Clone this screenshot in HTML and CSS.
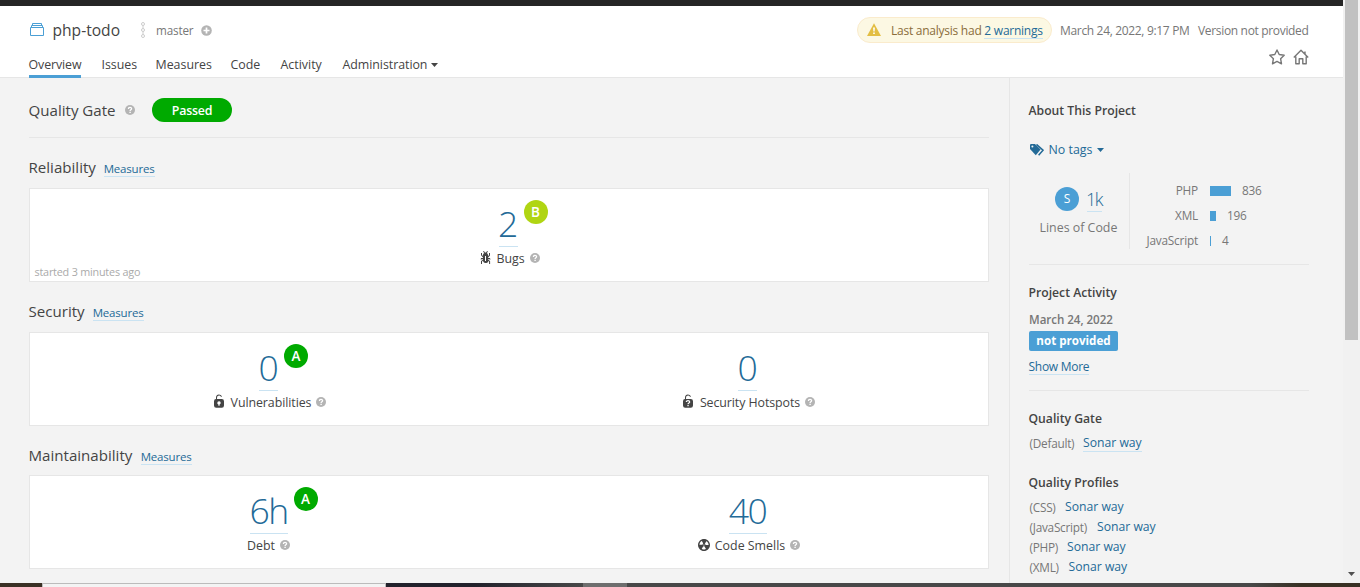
FILE: index.html
```html
<!DOCTYPE html>
<html lang="en">
<head>
<meta charset="utf-8">
<title>php-todo</title>
<link rel="stylesheet" href="styles.css">
</head>
<body>
<svg class="defs" aria-hidden="true">
  <symbol id="help" viewBox="0 0 10 10"><circle cx="5" cy="5" r="5" fill="#b4b4b4"/><path d="M3.4 3.9C3.4 1.8 6.6 1.8 6.6 3.8C6.6 4.8 5.1 4.8 5.1 6" fill="none" stroke="#fff" stroke-width="1.3"/><path d="M4.4 6.8h1.4v1.3H4.4z" fill="#fff"/></symbol>
  <symbol id="caret" viewBox="0 0 7 4"><path d="M0 0h7L3.500 4z" fill="currentColor"/></symbol>
</svg>
<div class="topbar"></div>
<div class="shell">
  <div class="page">
    <header class="header">
      <div class="header-left">
        <div class="crumbs">
          <svg class="proj" width="14" height="13" viewBox="0 0 14 13" fill="none" stroke="#4b9fd5"><path d="M.5 4.500h13v8H.5zM1.500 4V2.500h11V4M2.500 2V.5h9V2"/></svg>
          <span class="proj-name">php-todo</span>
          <svg class="branch" width="6" height="16" viewBox="0 0 6 16" fill="none" stroke="#ccc"><circle cx="3" cy="2" r="1.500"/><circle cx="3" cy="8" r="1.500"/><circle cx="3" cy="14" r="1.500"/><path d="M3 3.500v3M3 9.500v3"/></svg>
          <span class="branch-name">master</span>
          <svg class="plus" width="11" height="11" viewBox="0 0 11 11"><circle cx="5.500" cy="5.500" r="5.300" fill="#b4b4b4"/><path d="M5.500 2.500v6M2.500 5.500h6" stroke="#fff" stroke-width="1.700"/></svg>
        </div>
        <nav class="tabs">
          <a class="tab t1 active">Overview</a><a class="tab t2">Issues</a><a class="tab t3">Measures</a><a class="tab t4">Code</a><a class="tab t5">Activity</a><a class="tab t6">Administration<svg width="7" height="4"><use href="#caret"/></svg></a>
        </nav>
      </div>
      <div class="header-right">
        <div class="meta">
          <div class="warning"><svg width="14" height="13" viewBox="0 0 14 13"><path d="M7 .2 14 13H0z" fill="#e3be43"/><path d="M6.100 4.500h1.800l-.3 4H6.400zM6.200 9.500h1.600V11H6.200z" fill="#fff"/></svg><span>Last analysis had <a class="link">2 warnings</a></span></div>
          <span class="date">March 24, 2022, 9:17 PM</span>
          <span class="version">Version not provided</span>
        </div>
        <div class="actions">
          <svg width="16" height="16" viewBox="0 0 16 16" fill="none" stroke="#777" stroke-width="1.400" stroke-linejoin="round"><path d="M8 1 10.200 5.500 15.200 6.200 11.600 9.700 12.500 14.800 8 12.400 3.500 14.800 4.400 9.700.8 6.200 5.800 5.500z"/></svg>
          <svg width="16" height="16" viewBox="0 0 16 16" fill="none" stroke="#777" stroke-width="1.400" stroke-linejoin="round"><path d="M.8 8.500 8 1.300 15.200 8.500M2.800 7.500V14.800H6.200V9.700H9.800V14.800H13.200V7.500M12 5V2.500"/></svg>
        </div>
      </div>
    </header>
    <div class="content">
      <main class="main">
        <div class="gate"><h2 class="gate-title">Quality Gate</h2><svg class="help" width="10" height="10"><use href="#help"/></svg><span class="passed">Passed</span></div>
        <section class="domain">
          <div class="domain-head"><h2 class="reliability">Reliability</h2><a class="link measures">Measures</a></div>
          <div class="card">
            <div class="cell"><div class="value"><a class="num">2</a><span class="rating b">B</span></div><div class="label"><svg width="16" height="16" viewBox="2 2 12 12" class="ic bug"><path d="M11 9h1.300l.5.8.8-.5-.8-1.300H11v-.3l2-2.300V3h-1v2l-1 1.200V5c-.1-.8-.7-1.500-1.400-1.900L11 1.800l-.7-.7-1.800 1.600-1.800-1.600-.7.7 1.500 1.300C6.700 3.500 6.100 4.200 6 5v1.100L5 5V3H4v2.300l2 2.300V8H4.200l-.7 1.200.8.5.4-.7H6v.3l-2 1.900V14h1v-2.400l1-1C6 12 7.100 13 8.400 13h.8c.7 0 1.400-.3 1.800-.9.3-.4.3-.9.2-1.400l.9.9V14h1v-2.800l-2-1.900V9zm-2 2H8V6h1v5z"/></svg><span>Bugs</span><svg width="10" height="10"><use href="#help"/></svg></div></div>
            <span class="started">started 3 minutes ago</span>
          </div>
        </section>
        <section class="domain">
          <div class="domain-head"><h2 class="security">Security</h2><a class="link measures">Measures</a></div>
          <div class="card">
            <div class="cell"><div class="value"><a class="num">0</a><span class="rating a">A</span></div><div class="label"><svg width="16" height="16" viewBox="0 0 16 16" class="ic lock"><path d="M10.800 5H6V3.900a2.280 2.280 0 0 1 2-2.500 2.220 2.220 0 0 1 1.800 1.200.48.48 0 0 0 .7.2.48.48 0 0 0 .2-.7A3 3 0 0 0 8 .4a3.340 3.340 0 0 0-3 3.500v1.200a2.160 2.160 0 0 0-2 2.100v4.400a2.220 2.220 0 0 0 2.200 2.200h5.600a2.220 2.220 0 0 0 2.200-2.200V7.200A2.220 2.220 0 0 0 10.800 5zm-2.200 5.500v1.200H7.400v-1.200a1.660 1.660 0 0 1-1.100-1.600A1.750 1.750 0 0 1 8 7.200a1.710 1.710 0 0 1 .6 3.300z"/></svg><span class="vuln">Vulnerabilities</span><svg width="10" height="10"><use href="#help"/></svg></div></div>
            <div class="cell"><div class="value"><a class="num">0</a></div><div class="label"><svg width="16" height="16" viewBox="0 0 16 16" class="ic lock"><path d="M10.800 5H6V3.900a2.280 2.280 0 0 1 2-2.500 2.220 2.220 0 0 1 1.800 1.200.48.48 0 0 0 .7.2.48.48 0 0 0 .2-.7A3 3 0 0 0 8 .4a3.340 3.340 0 0 0-3 3.500v1.200a2.160 2.160 0 0 0-2 2.100v4.400a2.220 2.220 0 0 0 2.200 2.200h5.600a2.220 2.220 0 0 0 2.200-2.200V7.200A2.220 2.220 0 0 0 10.800 5z"/><path d="M6.300 8C6.300 6.100 9.700 6.100 9.700 8C9.700 9.100 8 9 8 10.300" fill="none" stroke="#fff" stroke-width="1.200"/><path d="M7.400 11h1.300v1.300H7.400z" fill="#fff"/></svg><span class="hot">Security Hotspots</span><svg width="10" height="10"><use href="#help"/></svg></div></div>
          </div>
        </section>
        <section class="domain last">
          <div class="domain-head"><h2 class="maintain">Maintainability</h2><a class="link measures">Measures</a></div>
          <div class="card">
            <div class="cell"><div class="value"><a class="num two">6h</a><span class="rating a">A</span></div><div class="label debt-label"><span class="debt">Debt</span><svg width="10" height="10"><use href="#help"/></svg></div></div>
            <div class="cell"><div class="value"><a class="num two">40</a></div><div class="label"><svg width="16" height="16" viewBox="2 2 12 12" class="ic smell"><path d="M8 2C4.700 2 2 4.700 2 8s2.700 6 6 6 6-2.700 6-6-2.700-6-6-6zm-.5 5.500h.9v.9h-.9v-.9zm-3.800.2c-.1 0-.2-.1-.2-.2 0-.4.1-1.200.6-2S5.300 4.200 5.600 4c.2 0 .3 0 .3.1l1.300 2.300c0 .1 0 .2-.1.2-.1.2-.2.3-.3.5-.1.2-.2.4-.2.5 0 .1-.1.2-.2.2l-2.700-.1zM9.900 12c-.3.2-1.100.5-2 .5-.9 0-1.700-.3-2-.5-.1 0-.1-.2-.1-.3l1.300-2.300c0-.1.1-.1.2-.1.2.1.3.1.5.1s.4 0 .5-.1c.1 0 .2 0 .2.1l1.300 2.300c.2.2.2.3.1.3zm2.500-4.100L9.700 8c-.1 0-.2-.1-.2-.2 0-.2-.1-.4-.2-.5 0-.1-.2-.3-.3-.4-.1 0-.1-.1-.1-.2l1.300-2.300c.1-.1.2-.1.3-.1.3.2 1 .7 1.500 1.500s.6 1.600.6 2c0 0-.1.1-.2.1z"/></svg><span class="smells">Code Smells</span><svg width="10" height="10"><use href="#help"/></svg></div></div>
          </div>
        </section>
      </main>
      <aside class="side">
        <h4 class="about">About This Project</h4>
        <a class="tags"><svg width="14" height="12" viewBox="0 0 14 12"><path d="M0 .8 .8 0H5L10.600 5.600 5.800 11.300 0 5z" fill="#236a97"/><circle cx="2.400" cy="2.400" r="1" fill="#f3f3f3"/><path d="M6.500.4 13 6.200 8.600 11.200" fill="none" stroke="#236a97" stroke-width="1.500"/></svg><span>No tags</span><svg class="tag-caret" width="7" height="4"><use href="#caret"/></svg></a>
        <div class="size">
          <div class="loc"><div class="loc-top"><span class="size-s">S</span><a class="onek">1k</a></div><div class="loc-label">Lines of Code</div></div>
          <div class="langs">
            <div class="lang"><span>PHP</span><i style="width:21px"></i><b>836</b></div>
            <div class="lang"><span>XML</span><i style="width:6px"></i><b>196</b></div>
            <div class="lang"><span>JavaScript</span><i style="width:1px"></i><b>4</b></div>
          </div>
        </div>
        <div class="activity">
          <h4>Project Activity</h4>
          <div class="act-date">March 24, 2022</div>
          <div class="badge">not provided</div>
          <a class="link more">Show More</a>
        </div>
        <h4 class="qg">Quality Gate</h4>
        <div class="row"><span class="k1">(Default)</span><a class="sonar link">Sonar way</a></div>
        <h4 class="qp">Quality Profiles</h4>
        <div class="row"><span class="k2">(CSS)</span><a class="sonar">Sonar way</a></div>
        <div class="row"><span class="k3">(JavaScript)</span><a class="sonar">Sonar way</a></div>
        <div class="row"><span class="k4">(PHP)</span><a class="sonar">Sonar way</a></div>
        <div class="row"><span class="k5">(XML)</span><a class="sonar">Sonar way</a></div>
      </aside>
    </div>
  </div>
  <div class="scrollbar"><div class="thumb"></div><svg width="7" height="4"><use href="#caret"/></svg></div>
</div>
<div class="taskbar"><div class="s1"></div><div class="s2"></div><div class="s3"></div><div class="s4"></div><div class="s5"></div></div>
</body>
</html>
```
FILE: styles.css
```css
* { box-sizing: border-box; }
body { margin: 0; width: 1360px; height: 587px; overflow: hidden; background: #f3f3f3; font: 12.4px/20px "Open Sans", "Noto Sans", sans-serif; color: #444; display: flex; flex-direction: column; }
h2, h4 { margin: 0; font-weight: 400; }
svg { display: block; flex: none; }
span, a, h2, h4 { white-space: nowrap; }
.defs { display: none; }
.topbar { height: 6px; width: 1343px; background: #262626; flex: none; }
.shell { display: flex; height: 577px; flex: none; }
.page { width: 1343px; }
.header { height: 72px; background: #fff; border-bottom: 1px solid #e6e6e6; display: flex; justify-content: space-between; padding: 0 34px 0 29px; }
.crumbs { display: flex; align-items: center; height: 24px; margin-top: 12px; }
.proj { margin: -2px 9px 0 1px; }
.proj-name { font-size: 15.6px; width: 87px; margin-left: -0.5px; margin-right: 0.5px; }
.branch { margin-right: 10px; }
.branch-name { color: #777; width: 45px; font-size: 11.7px; letter-spacing: -0.15px; }
.plus { margin-left: -0.5px; }
.tabs { display: flex; margin-top: 10px; }
.tab { height: 26px; line-height: 22px; padding-top: 2px; margin-right: 20px; display: flex; align-items: center; gap: 4px; }
.active { border-bottom: 3px solid #4b9fd5; letter-spacing: -0.1px; text-indent: -0.5px; }
.t1 { width: 52px; } .t2 { width: 34px; } .t3 { width: 55px; } .t4 { width: 30px; } .t5 { width: 42px; }
.tab:not(.active) { padding-bottom: 3px; padding-left: 0.5px; }
.t6 { letter-spacing: -0.05px; }
.header-right { display: flex; flex-direction: column; align-items: flex-end; }
.meta { display: flex; align-items: center; color: #777; font-size: 12px; margin-top: 11px; letter-spacing: -0.33px; }
.warning { width: 195px; height: 26px; border: 1px solid #faebcc; border-radius: 13px; background: #fcf8e3; color: #8a6d3b; display: flex; align-items: center; gap: 10px; padding-left: 9px; letter-spacing: -0.25px; }
.warning svg { margin-top: -1px; }
.warning span, .date, .version { padding-top: 1px; }
.link { color: #236a97; border-bottom: 1px solid #cae3f2; }
.date { width: 130px; margin: 0 8px; }
.version { width: 111px; }
.warning .link { display: inline-block; line-height: 15px; }
.actions { display: flex; gap: 8px; margin-top: 6px; }
.content { display: flex; height: 505px; }
.main { width: 1010px; border-right: 1px solid #e6e6e6; padding: 0 20px 0 29px; }
.gate { height: 60px; border-bottom: 1px solid #e6e6e6; display: flex; align-items: center; padding-top: 5px; }
.gate h2, .domain-head h2 { font-size: 15.1px; text-indent: -0.5px; }
.gate-title { width: 96px; }
.gate .passed { margin-left: 17px; width: 80px; height: 24px; border-radius: 12px; background: #0a0; color: #fff; text-align: center; line-height: 25px; font-weight: 600; letter-spacing: -0.2px; }
.domain-head { height: 50px; display: flex; align-items: center; padding-top: 8px; gap: 8px; }
.measures { font-size: 11.5px; line-height: 15px; margin-top: 3px; height: 16px; width: 51px; letter-spacing: -0.2px; text-indent: -0.3px; }
.reliability { width: 67px; } .security { width: 56px; } .maintain { width: 104px; }
.card { height: 94px; background: #fff; border: 1px solid #e6e6e6; display: flex; position: relative; }
.last .domain-head { height: 49px; padding-top: 9px; }
.cell { flex: 1; display: flex; flex-direction: column; align-items: center; padding-right: 2px; }
.value { position: relative; height: 58px; display: flex; padding-top: 13px; }
.num { font-size: 35.5px; font-weight: 300; line-height: 42px; height: 45px; width: 19px; color: #236a97; border-bottom: 1px solid #cae3f2; display: flex; justify-content: center; }
.num.two { width: 38px; letter-spacing: -1.5px; }
.rating { position: absolute; left: calc(100% + 6px); top: 11px; width: 24px; height: 24px; border-radius: 50%; color: #fff; text-align: center; line-height: 25px; font-size: 13.5px; font-weight: 600; }
.a { background: #0a0; } .b { background: #b0d513; }
.label { height: 20px; margin-top: 1px; display: flex; align-items: center; gap: 5px; padding-left: 3px; }
.debt-label { padding-left: 0; }
.label span { padding-top: 1px; }
.vuln, .hot { letter-spacing: -0.08px; }
.ic { fill: #444; width: 12px; height: 12px; }
.bug { overflow: visible; }
.lock { width: 16px; height: 16px; margin: -1px -1px 0 -3px; }
.started { position: absolute; left: 4.5px; bottom: -1px; font-size: 10.8px; letter-spacing: -0.2px; color: #aaa; }
.side { width: 300px; padding: 23px 0 0 19px; color: #777; font-size: 12px; }
.side h4 { color: #444; font-weight: 600; font-size: 12.2px; line-height: 20px; text-indent: -0.5px; }
.tags { display: flex; align-items: center; color: #236a97; gap: 4.5px; padding-left: 1px; margin-top: 18px; height: 22px; font-size: 12.4px; }
.size { height: 104px; border-bottom: 1px solid #e6e6e6; display: flex; padding-top: 12px; width: 280px; }
.loc { width: 101px; height: 76px; border-right: 1px solid #e6e6e6; padding-top: 14px; }
.loc-top { display: flex; height: 24px; padding-left: 26px; gap: 8px; }
.size-s { width: 24px; height: 24px; border-radius: 12px; background: #4b9fd5; color: #fff; line-height: 24px; text-align: center; }
.onek { font-size: 18px; font-weight: 300; color: #236a97; line-height: 24px; height: 25px; width: 15px; border-bottom: 1px solid #cae3f2; letter-spacing: -1.5px; text-indent: -1px; }
.loc-label { margin: 7px 0 0 10.5px; font-size: 12.4px; }
.langs { padding-top: 5px; }
.lang { display: flex; align-items: center; height: 25px; font-size: 11.8px; letter-spacing: -0.2px; }
.lang span { width: 68px; text-align: right; margin-right: 12px; }
.lang span, .lang b { padding-bottom: 2px; }
.lang i { height: 10px; background: #4b9fd5; }
.lang b { font-weight: 400; margin-left: 11px; }
.activity { height: 126px; padding-top: 18px; border-bottom: 1px solid #e6e6e6; width: 280px; }
.act-date { font-weight: 600; font-size: 11.6px; line-height: 20px; margin-top: 7px; letter-spacing: -0.05px; }
.badge { width: 89px; height: 20px; border-radius: 2px; background: #4b9fd5; color: #fff; font-weight: 700; font-size: 11.6px; text-align: center; line-height: 19px; margin-top: 1px; }
.more { display: block; width: 60px; height: 16px; line-height: 15px; margin-top: 8px; letter-spacing: -0.27px; text-indent: -0.5px; }
.side .qg { margin-top: 18px; }
.row { display: flex; align-items: center; height: 20px; gap: 8px; font-size: 11.8px; letter-spacing: -0.25px; padding-left: 0.5px; }
.row span { padding-bottom: 1px; }
.qg + .row { margin-top: 4px; }
.side .qp { margin-top: 20px; margin-bottom: 4px; }
.sonar { font-size: 12.2px; letter-spacing: 0; color: #236a97; }
.sonar.link { height: 17px; line-height: 15px; }
.k1 { width: 45.5px; } .k2 { width: 27.5px; } .k3 { width: 59.5px; } .k4 { width: 29.5px; } .k5 { width: 31px; }
.scrollbar { width: 17px; height: 583px; margin-top: -6px; padding-left: 2px; background: #f1f1f1; color: #505050; }
.thumb { width: 13px; height: 340px; background: #c1c1c1; }
.scrollbar svg { margin: 232px 0 0 3px; }
.taskbar { display: flex; height: 4px; flex: none; background: #484848; }
.s1 { width: 42px; background: #3a3024; }
.s2 { width: 344px; background: #f3f3f3; border: solid #bbb; border-width: 1px 1px 0; }
.s3 { width: 197px; background: linear-gradient(90deg, #22212b 45%, #484848); }
.s4 { width: 44px; background: #6e6e6e; }
.s5 { flex: 1; background: linear-gradient(90deg, #484848 85%, #383023 92%); }
```
